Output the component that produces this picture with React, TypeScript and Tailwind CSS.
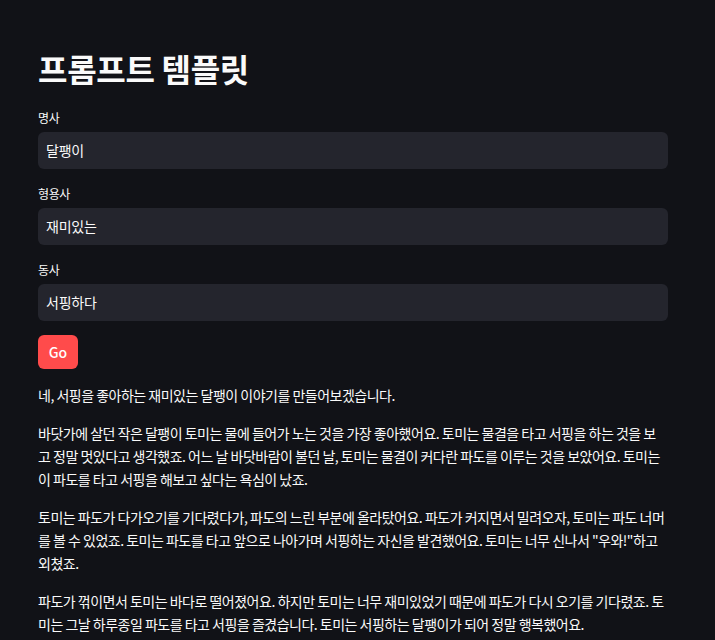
import React from "react";

const font = { fontFamily: '"Noto Sans CJK KR", "Noto Sans", sans-serif' };

function Field({ label, value }: { label: string; value: string }) {
  return (
    <div className="mb-[15px]">
      <div className="flex h-5 items-center text-[12px] tracking-[-0.4px] text-[#fafafa]">{label}</div>
      <div className="mt-1 flex h-[37px] items-center rounded-md bg-[#24252d] px-2 text-[14px] tracking-[-0.2px] text-[#fafafa]">
        {value}
      </div>
    </div>
  );
}

const paragraphs = [
  "네, 서핑을 좋아하는 재미있는 달팽이 이야기를 만들어보겠습니다.",
  "바닷가에 살던 작은 달팽이 토미는 물에 들어가 노는 것을 가장 좋아했어요. 토미는 물결을 타고 서핑을 하는 것을 보고 정말 멋있다고 생각했죠. 어느 날 바닷바람이 불던 날, 토미는 물결이 커다란 파도를 이루는 것을 보았어요. 토미는 이 파도를 타고 서핑을 해보고 싶다는 욕심이 났죠.",
  "토미는 파도가 다가오기를 기다렸다가, 파도의 느린 부분에 올라탔어요. 파도가 커지면서 밀려오자, 토미는 파도 너머를 볼 수 있었죠. 토미는 파도를 타고 앞으로 나아가며 서핑하는 자신을 발견했어요. 토미는 너무 신나서 \"우와!\"하고 외쳤죠.",
  "파도가 꺾이면서 토미는 바다로 떨어졌어요. 하지만 토미는 너무 재미있었기 때문에 파도가 다시 오기를 기다렸죠. 토미는 그날 하루종일 파도를 타고 서핑을 즐겼습니다. 토미는 서핑하는 달팽이가 되어 정말 행복했어요.",
];

export default function App() {
  return (
    <div className="min-h-[640px] w-full bg-[#111217]" style={font}>
      <div className="w-[630px] pl-[38px] pt-[48px] box-content">
        <h1 className="mb-[20px] text-[32px] font-bold leading-[40px] tracking-[-0.3px] text-[#fafafa]">
          프롬프트 템플릿
        </h1>
        <Field label="명사" value="달팽이" />
        <Field label="형용사" value="재미있는" />
        <Field label="동사" value="서핑하다" />
        <button className="-mt-px flex h-[34px] w-10 items-center justify-center rounded-md bg-[#ff4b4b] text-[14px] font-medium text-white">
          Go
        </button>
        <div className="mt-[15px] text-[14px] leading-[23px] tracking-[-0.5px] text-[#fafafa]">
          {paragraphs.map((p, i) => (
            <p key={i} className="mb-[15px]">
              {p}
            </p>
          ))}
        </div>
      </div>
    </div>
  );
}
